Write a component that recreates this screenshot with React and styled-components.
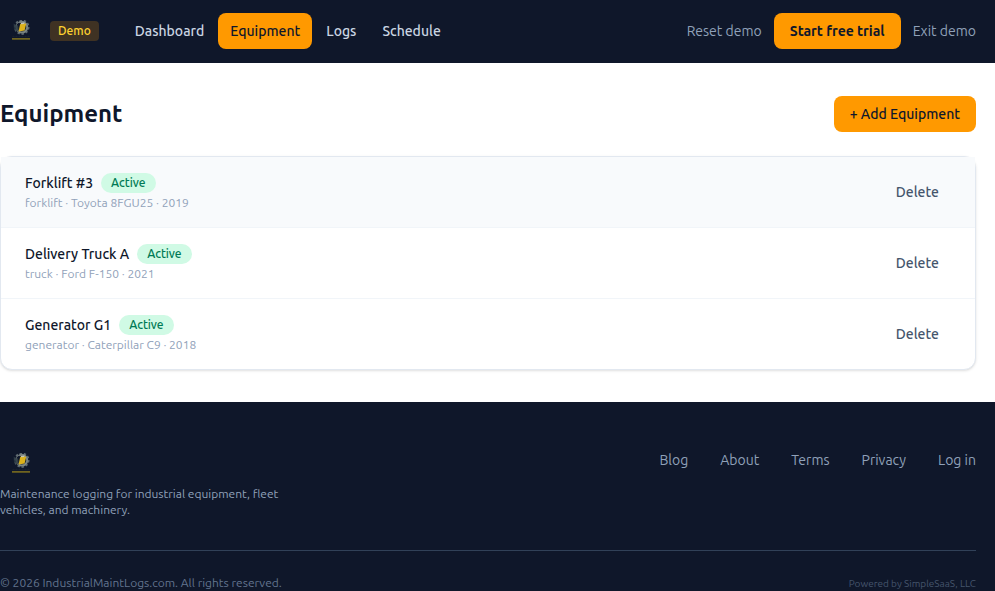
import React from "react";
import styled, { createGlobalStyle } from "styled-components";

const equipment = [
  { name: "Forklift #3", details: "forklift · Toyota 8FGU25 · 2019", hovered: true },
  { name: "Delivery Truck A", details: "truck · Ford F-150 · 2021" },
  { name: "Generator G1", details: "generator · Caterpillar C9 · 2018" },
];

function Logo() {
  return (
    <LogoBox>
      <svg width="20" height="22" viewBox="0 0 20 22">
        <circle
          cx="10.8"
          cy="7.2"
          r="6.9"
          fill="none"
          stroke="#5f6b72"
          strokeWidth="1.6"
          strokeDasharray="2.4 1.9"
        />
        <circle cx="10.8" cy="7.2" r="5.4" fill="#1b242c" stroke="#7b8583" strokeWidth="2" />
        <path d="M2.5 3.5l4.5 2.5 1 6-5-2z" fill="#2a3842" opacity="0.8" />
        <path d="M5.5 4.5l2.5-2 1.5 1.5-2 3z" fill="#0f172a" />
        <path d="M9.3 3.8l5.9-.4-1.6 7.2-6.1.8z" fill="#dcb21c" />
        <path d="M10 2.8l3.6-.2-.2 1.4-3.5.2z" fill="#c5c6b8" />
        <path d="M1.5 16.3h18" stroke="#1c2630" strokeWidth="1" strokeDasharray="2 1" />
        <path d="M1 18.9h18" stroke="#89791d" strokeWidth="1.4" />
      </svg>
    </LogoBox>
  );
}

function App() {
  return (
    <>
      <GlobalStyle />
      <Header>
        <Bar>
          <Brand>
            <Logo />
            <DemoBadge>Demo</DemoBadge>
          </Brand>
          <Nav>
            <NavLink>Dashboard</NavLink>
            <NavLink $active>Equipment</NavLink>
            <NavLink>Logs</NavLink>
            <NavLink>Schedule</NavLink>
          </Nav>
          <Actions>
            <TextLink>Reset demo</TextLink>
            <Button $bold>Start free trial</Button>
            <TextLink>Exit demo</TextLink>
          </Actions>
        </Bar>
      </Header>
      <Main>
        <TitleRow>
          <Title>Equipment</Title>
          <Button>+ Add Equipment</Button>
        </TitleRow>
        <Card>
          {equipment.map((item) => (
            <Row key={item.name} $hovered={item.hovered}>
              <div>
                <NameLine>
                  <Name>{item.name}</Name>
                  <Status>Active</Status>
                </NameLine>
                <Details>{item.details}</Details>
              </div>
              <DeleteButton>Delete</DeleteButton>
            </Row>
          ))}
        </Card>
      </Main>
      <Footer>
        <FooterTop>
          <div>
            <Logo />
            <Tagline>
              Maintenance logging for industrial equipment, fleet
              <br />
              vehicles, and machinery.
            </Tagline>
          </div>
          <FooterLinks>
            <TextLink>Blog</TextLink>
            <TextLink>About</TextLink>
            <TextLink>Terms</TextLink>
            <TextLink>Privacy</TextLink>
            <TextLink>Log in</TextLink>
          </FooterLinks>
        </FooterTop>
        <FooterBottom>
          <Copyright>© 2026 IndustrialMaintLogs.com. All rights reserved.</Copyright>
          <Powered>Powered by SimpleSaaS, LLC</Powered>
        </FooterBottom>
      </Footer>
    </>
  );
}

export default App;

const GlobalStyle = createGlobalStyle`
  * {
    box-sizing: border-box;
  }
  body {
    margin: 0;
    height: 591px;
    overflow: hidden;
    background: #ffffff;
    color: #0f172b;
    font-family: Ubuntu, "Noto Sans", sans-serif;
    font-size: 14px;
    line-height: 20px;
    white-space: nowrap;
  }
`;

const Header = styled.header`
  height: 63px;
  padding: 13px 19px 0 0;
  background: #0f172a;
`;

const Bar = styled.div`
  display: flex;
  align-items: center;
  height: 36px;
`;

const Brand = styled.div`
  display: flex;
  align-items: center;
  gap: 8px;
  margin-right: 24px;
`;

const LogoBox = styled.div`
  display: flex;
  align-items: center;
  width: 42px;
  height: 36px;
  padding-left: 11px;
`;

const DemoBadge = styled.span`
  padding: 2px 8px;
  border-radius: 4px;
  background: #3f3223;
  color: #ffd230;
  font-size: 12px;
  font-weight: 500;
  line-height: 16px;
`;

const Nav = styled.nav`
  display: flex;
  gap: 2px;
`;

const NavLink = styled.a`
  padding: 8px 12px;
  border-radius: 8px;
  background: ${(props) => (props.$active ? "#ff9900" : "transparent")};
  color: ${(props) => (props.$active ? "#0f172b" : "#cad5e2")};
  font-weight: 500;
`;

const Actions = styled.div`
  display: flex;
  align-items: center;
  gap: 12px;
  margin-left: auto;
`;

const TextLink = styled.a`
  color: #90a1b9;
`;

const Button = styled.button`
  height: 36px;
  padding: 0 16px;
  border: none;
  border-radius: 8px;
  background: #ff9900;
  color: #0f172b;
  font: inherit;
  font-weight: ${(props) => (props.$bold ? 600 : 500)};
`;

const Main = styled.main`
  padding: 33px 19px 32px 0;
`;

const TitleRow = styled.div`
  display: flex;
  align-items: center;
  justify-content: space-between;
  height: 36px;
  margin-bottom: 24px;
`;

const Title = styled.h1`
  margin: 0;
  font-size: 24px;
  font-weight: 600;
  line-height: 32px;
`;

const Card = styled.section`
  border: 1px solid #e2e8f0;
  border-radius: 12px;
  background: #ffffff;
  box-shadow: 0 1px 3px rgba(0, 0, 0, 0.1), 0 1px 2px -1px rgba(0, 0, 0, 0.1);
`;

const Row = styled.div`
  display: flex;
  align-items: center;
  justify-content: space-between;
  height: 71px;
  padding: 0 36px 0 24px;
  border-bottom: 1px solid #f1f5f9;
  background: ${(props) => (props.$hovered ? "#f8fafc" : "transparent")};
  &:last-child {
    height: 70px;
    border-bottom: none;
  }
`;

const NameLine = styled.div`
  display: flex;
  align-items: center;
  gap: 8px;
  height: 20px;
`;

const Name = styled.span`
  font-weight: 500;
`;

const Status = styled.span`
  padding: 2px 10px;
  border-radius: 10px;
  background: #d0fae5;
  color: #007a55;
  font-size: 12px;
  font-weight: 500;
  line-height: 16px;
`;

const Details = styled.div`
  margin-top: 2px;
  color: #90a1b9;
  font-size: 12px;
  line-height: 16px;
`;

const DeleteButton = styled.button`
  padding: 0;
  border: none;
  background: none;
  color: #45556c;
  font: inherit;
  font-weight: 500;
`;

const Footer = styled.footer`
  height: 189px;
  padding: 44px 19px 0 0;
  background: #0f172a;
`;

const FooterTop = styled.div`
  display: flex;
  justify-content: space-between;
  height: 105px;
  border-bottom: 1px solid #314158;
`;

const Tagline = styled.p`
  margin: 4px 0 0;
  color: #90a1b9;
  font-size: 12px;
  line-height: 16px;
`;

const FooterLinks = styled.nav`
  display: flex;
  gap: 32px;
  padding-top: 4px;
`;

const FooterBottom = styled.div`
  display: flex;
  align-items: baseline;
  justify-content: space-between;
  padding-top: 24px;
  line-height: 16px;
`;

const Copyright = styled.span`
  color: #62748e;
  font-size: 12px;
`;

const Powered = styled.span`
  color: #45556c;
  font-size: 10px;
`;
